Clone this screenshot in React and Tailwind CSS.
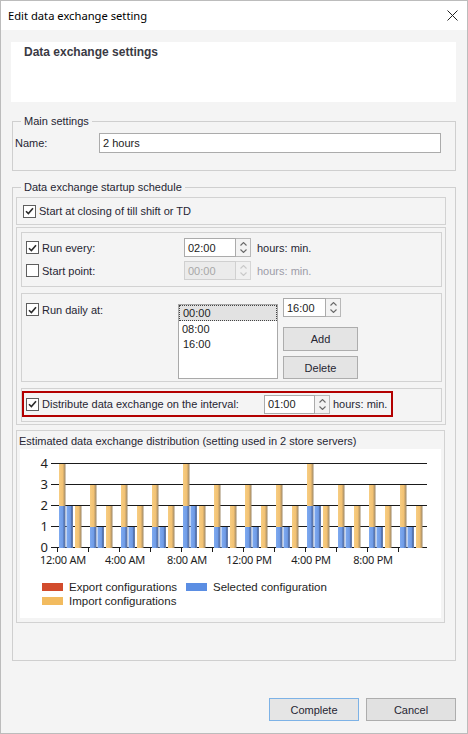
import React from "react";

const Chev = ({ up, c }) => (
  <svg width="7" height="4" viewBox="0 0 7 4">
    <path d={up ? "M0.5 3.5L3.5 0.5L6.5 3.5" : "M0.5 0.5L3.5 3.5L6.5 0.5"} fill="none" stroke={c} strokeWidth="1.1" />
  </svg>
);

function Spin({ value, textW, disabled }) {
  const c = disabled ? "#c9c9c9" : "#6a6a6a";
  return (
    <div className="flex h-[19px] shrink-0">
      <div
        className={`${textW} h-full border flex items-center pl-[3px] ${
          disabled ? "border-[#d0d0d0] bg-[#ebebeb] text-[#a8a8a8]" : "border-[#ababab] bg-white text-[#222]"
        }`}
      >
        {value}
      </div>
      <div
        className={`w-[15px] h-full border border-l-0 flex flex-col items-center justify-center gap-[3px] ${
          disabled ? "border-[#d6d6d6] bg-[#f0f0f0]" : "border-[#b8b8b8] bg-[#f3f3f3]"
        }`}
      >
        <Chev up c={c} />
        <Chev c={c} />
      </div>
    </div>
  );
}

function Check({ checked }) {
  return (
    <span className="w-[13px] h-[13px] border border-[#5e5e5e] bg-white flex items-center justify-center shrink-0">
      {checked && (
        <svg width="9" height="8" viewBox="0 0 9 8">
          <path d="M1 4.2L3.4 6.6L8 1.2" stroke="#2a2a2a" strokeWidth="1.6" fill="none" />
        </svg>
      )}
    </span>
  );
}

function Chart() {
  const totals = [4, 3, 3, 3, 4, 3, 3, 3, 4, 3, 3, 3];
  const Y = (v) => 99 - 21 * v;
  const grid = [15, 36, 57, 78, 99];
  const labels = ["12:00 AM", "4:00 AM", "8:00 AM", "12:00 PM", "4:00 PM", "8:00 PM"];
  return (
    <svg width="421" height="131" viewBox="0 0 421 131" className="block shrink-0">
      <defs>
        <linearGradient id="og" x1="0" x2="1" y1="0" y2="0">
          <stop offset="0" stopColor="#f7cd82" />
          <stop offset="0.6" stopColor="#f2c172" />
          <stop offset="0.75" stopColor="#c9a56c" />
          <stop offset="1" stopColor="#a08a68" />
        </linearGradient>
        <linearGradient id="bg" x1="0" x2="1" y1="0" y2="0">
          <stop offset="0" stopColor="#7eaaf0" />
          <stop offset="0.6" stopColor="#6f9be6" />
          <stop offset="0.75" stopColor="#5274b4" />
          <stop offset="1" stopColor="#6c80a8" />
        </linearGradient>
      </defs>
      {grid.map((y) => (
        <line key={y} x1="31" x2="407" y1={y - 0.5} y2={y - 0.5} stroke="#1a1a1a" strokeWidth="1.2" />
      ))}
      {totals.map((_, k) => (
        <line key={"t" + k} x1={37.5 + 31 * k} x2={37.5 + 31 * k} y1="98" y2="103" stroke="#1a1a1a" strokeWidth="1" />
      ))}
      {totals.map((t, k) => {
        const x0 = 39 + 31 * k;
        const sel = t - 2;
        return (
          <g key={k}>
            <rect x={x0} y={Y(sel)} width="6.5" height={21 * sel} fill="url(#bg)" />
            <rect x={x0} y={Y(t)} width="6.5" height={42} fill="url(#og)" />
            <rect x={x0 + 7.5} y={Y(sel)} width="6.5" height={21 * sel} fill="url(#bg)" />
            <rect x={x0 + 16} y={Y(2)} width="6.5" height={42} fill="url(#og)" />
          </g>
        );
      })}
      {[4, 3, 2, 1, 0].map((v) => (
        <text key={v} x="28" y={Y(v) + 4} textAnchor="end" fontSize="13" fill="#1e1e1e" fontFamily="'Noto Sans', 'Liberation Sans', sans-serif">
          {v}
        </text>
      ))}
      {labels.map((l, i) => (
        <text
          key={l}
          x={43 + 62 * i}
          y="115"
          textAnchor="middle"
          fontSize="11"
          letterSpacing="-0.25"
          fill="#1e1e1e"
          fontFamily="'Noto Sans', 'Liberation Sans', sans-serif"
        >
          {l}
        </text>
      ))}
    </svg>
  );
}

export default function App() {
  return (
    <div className="w-[468px] h-[734px] border border-[#bcbcbc] bg-[#f4f4f4] flex flex-col font-['Liberation_Sans',Arial,sans-serif] text-[11px] leading-[14px] text-[#262633]">
      {/* Title bar */}
      <div className="h-[29px] bg-white flex items-center justify-between pl-[7px] pr-[9px] shrink-0">
        <span className="font-['Noto_Sans',sans-serif] text-[11.2px] text-black">Edit data exchange setting</span>
        <svg width="11" height="11" viewBox="0 0 11 11">
          <path d="M0.5 0.5L10.5 10.5M10.5 0.5L0.5 10.5" stroke="#222" strokeWidth="1" />
        </svg>
      </div>

      {/* Header panel */}
      <div className="mt-[12px] ml-[10px] w-[445px] h-[60px] bg-white pl-[13px] pt-[3px] shrink-0">
        <span className="font-bold text-[12px] text-[#3a3a44]">Data exchange settings</span>
      </div>

      {/* Main settings */}
      <fieldset className="mt-[12px] ml-[11px] w-[444px] border border-[#cfcfcf] px-[2px] pb-[17px]">
        <legend className="ml-[6px] px-[3px]">Main settings</legend>
        <div className="mt-[5px] flex items-center">
          <span className="w-[84px]">Name:</span>
          <div className="w-[342px] h-[20px] border border-[#ababab] bg-white flex items-center pl-[3px] text-[#222]">2 hours</div>
        </div>
      </fieldset>

      {/* Schedule */}
      <fieldset className="mt-[9px] ml-[11px] w-[444px] border border-[#cfcfcf] px-[3px] pb-[37px]">
        <legend className="ml-[5px] px-[3px]">Data exchange startup schedule</legend>

        <div className="mt-[3px] w-[430px] h-[28px] border border-[#d2d2d2] flex items-center pl-[6px]">
          <Check checked />
          <span className="ml-[3px]">Start at closing of till shift or TD</span>
        </div>

        <div className="mt-[2px] w-[430px] border border-[#d2d2d2] pt-[4px] pl-[4px] pb-[2px] flex flex-col gap-[6px]">
          {/* Box A */}
          <div className="w-[421px] h-[55px] border border-[#d2d2d2] pl-[4px] pt-[5px] flex flex-col gap-[4px]">
            <div className="flex items-center h-[19px]">
              <div className="w-[158px] flex items-center">
                <Check checked />
                <span className="ml-[3px]">Run every:</span>
              </div>
              <Spin value="02:00" textW="w-[52px]" />
              <span className="ml-[6px]">hours: min.</span>
            </div>
            <div className="flex items-center h-[19px]">
              <div className="w-[158px] flex items-center">
                <Check />
                <span className="ml-[3px]">Start point:</span>
              </div>
              <Spin value="00:00" textW="w-[52px]" disabled />
              <span className="ml-[6px] text-[#9c9ca8]">hours: min.</span>
            </div>
          </div>

          {/* Box B */}
          <div className="w-[421px] h-[89px] border border-[#d2d2d2] pl-[4px] flex">
            <div className="w-[152px] pt-[8px]">
              <div className="flex items-center h-[15px]">
                <Check checked />
                <span className="ml-[3px]">Run daily at:</span>
              </div>
            </div>
            <div className="mt-[10px] w-[100px] h-[75px] border border-[#a9a9a9] bg-white text-[#222] flex flex-col">
              <div className="h-[16px] bg-[#e2e2e2] border border-dotted border-[#444] pl-[3px] flex items-center">00:00</div>
              <div className="h-[15px] pl-[3px] flex items-center">08:00</div>
              <div className="h-[15px] pl-[4px] flex items-center">16:00</div>
            </div>
            <div className="ml-[5px] mt-[4px] flex flex-col">
              <Spin value="16:00" textW="w-[43px]" />
              <button className="mt-[10px] w-[75px] h-[24px] border border-[#adadad] bg-[#e4e4e4] text-[#262633] text-[11px]">Add</button>
              <button className="mt-[5px] w-[75px] h-[23px] border border-[#adadad] bg-[#e4e4e4] text-[#262633] text-[11px]">Delete</button>
            </div>
          </div>

          {/* Box C */}
          <div className="w-[421px] h-[34px] border border-[#d2d2d2] pt-[2px]">
            <div className="w-[371px] h-[26px] border-2 border-[#b30000] pl-[2px] flex items-center">
              <div className="w-[238px] flex items-center">
                <Check checked />
                <span className="ml-[3px]">Distribute data exchange on the interval:</span>
              </div>
              <Spin value="01:00" textW="w-[51px]" />
              <span className="ml-[3px]">hours: min.</span>
            </div>
          </div>
        </div>

        {/* Chart box */}
        <div className="mt-[5px] w-[429px] h-[193px] border border-[#d2d2d2] flex flex-col">
          <div className="pl-[2px] pt-[3px] h-[18px] shrink-0">Estimated data exchange distribution (setting used in 2 store servers)</div>
          <div className="ml-[3px] w-[421px] h-[169px] bg-white flex flex-col">
            <Chart />
            <div className="pl-[22px] grid grid-cols-[144px_1fr] text-[#1e1e1e] text-[11.5px]">
              <div className="flex items-center h-[14px]">
                <span className="w-[21px] h-[8px] bg-[#d24b2c]" />
                <span className="ml-[6px]">Export configurations</span>
              </div>
              <div className="flex items-center h-[14px]">
                <span className="w-[21px] h-[8px] bg-[#5b8ee3]" />
                <span className="ml-[6px]">Selected configuration</span>
              </div>
              <div className="flex items-center h-[14px]">
                <span className="w-[21px] h-[8px] bg-[#f2bb5f]" />
                <span className="ml-[6px]">Import configurations</span>
              </div>
            </div>
          </div>
        </div>
      </fieldset>

      {/* Buttons */}
      <div className="mt-[37px] flex justify-end gap-[7px] pr-[11px]">
        <button className="w-[90px] h-[23px] border border-[#7db2e6] bg-[#e5e5e5] text-[11px] text-[#262633]">Complete</button>
        <button className="w-[90px] h-[23px] border border-[#adadad] bg-[#e1e1e1] text-[11px] text-[#262633]">Cancel</button>
      </div>
    </div>
  );
}
